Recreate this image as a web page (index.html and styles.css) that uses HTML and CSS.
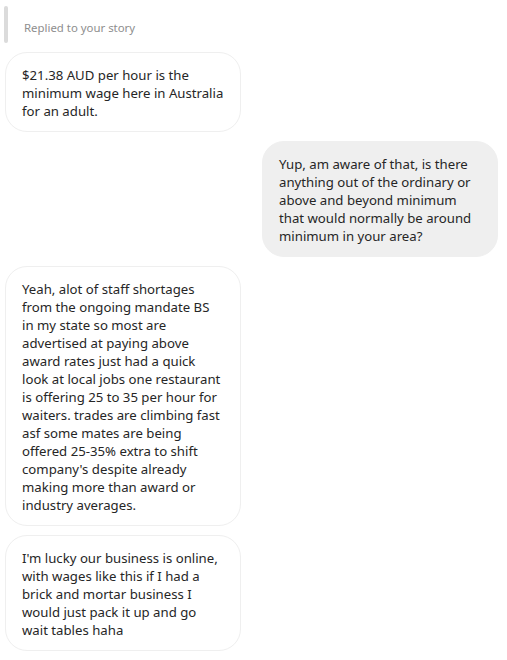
FILE: index.html
```html
<!DOCTYPE html>
<html>
<head>
<meta charset="utf-8">
<link rel="stylesheet" href="styles.css">
</head>
<body>
<div class="thread">
  <div class="reply">
    <span class="reply-bar"></span>
    <span class="reply-label">Replied to your story</span>
  </div>
  <div class="row left">
    <div class="bubble in">$21.38 AUD per hour is the<br>minimum wage here in Australia<br>for an adult.</div>
  </div>
  <div class="row right">
    <div class="bubble out">Yup, am aware of that, is there<br>anything out of the ordinary or<br>above and beyond minimum<br>that would normally be around<br>minimum in your area?</div>
  </div>
  <div class="row left">
    <div class="bubble in">Yeah, alot of staff shortages<br>from the ongoing mandate BS<br>in my state so most are<br>advertised at paying above<br>award rates just had a quick<br>look at local jobs one restaurant<br>is offering 25 to 35 per hour for<br>waiters. trades are climbing fast<br>asf some mates are being<br>offered 25-35% extra to shift<br>company's despite already<br>making more than award or<br>industry averages.</div>
  </div>
  <div class="row left">
    <div class="bubble in">I'm lucky our business is online,<br>with wages like this if I had a<br>brick and mortar business I<br>would just pack it up and go<br>wait tables haha</div>
  </div>
</div>
</body>
</html>
```

FILE: styles.css
```css
html, body {
  margin: 0;
  padding: 0;
  background: #ffffff;
}
body {
  font-family: "Noto Sans", "Open Sans", sans-serif;
  color: #262626;
}
.thread {
  display: flex;
  flex-direction: column;
  gap: 9px;
  padding: 6px 9px 10px 5px;
}
.reply {
  display: flex;
  align-items: center;
  gap: 16px;
  height: 37px;
  margin-left: -1px;
}
.reply-bar {
  width: 4px;
  height: 37px;
  border-radius: 2px;
  background: #dbdbdb;
}
.reply-label {
  padding-top: 5px;
  font-size: 11.4px;
  color: #8e8e8e;
}
.row {
  display: flex;
}
.row.right {
  justify-content: flex-end;
}
.bubble {
  box-sizing: border-box;
  width: 236px;
  padding: 13px 15px 11px 16px;
  border-radius: 22px;
  font-size: 13.2px;
  line-height: 18px;
  white-space: nowrap;
}
.bubble.in {
  border: 1px solid #efefef;
  background: #ffffff;
}
.bubble.out {
  border: 1px solid #efefef;
  background: #efefef;
}
```
